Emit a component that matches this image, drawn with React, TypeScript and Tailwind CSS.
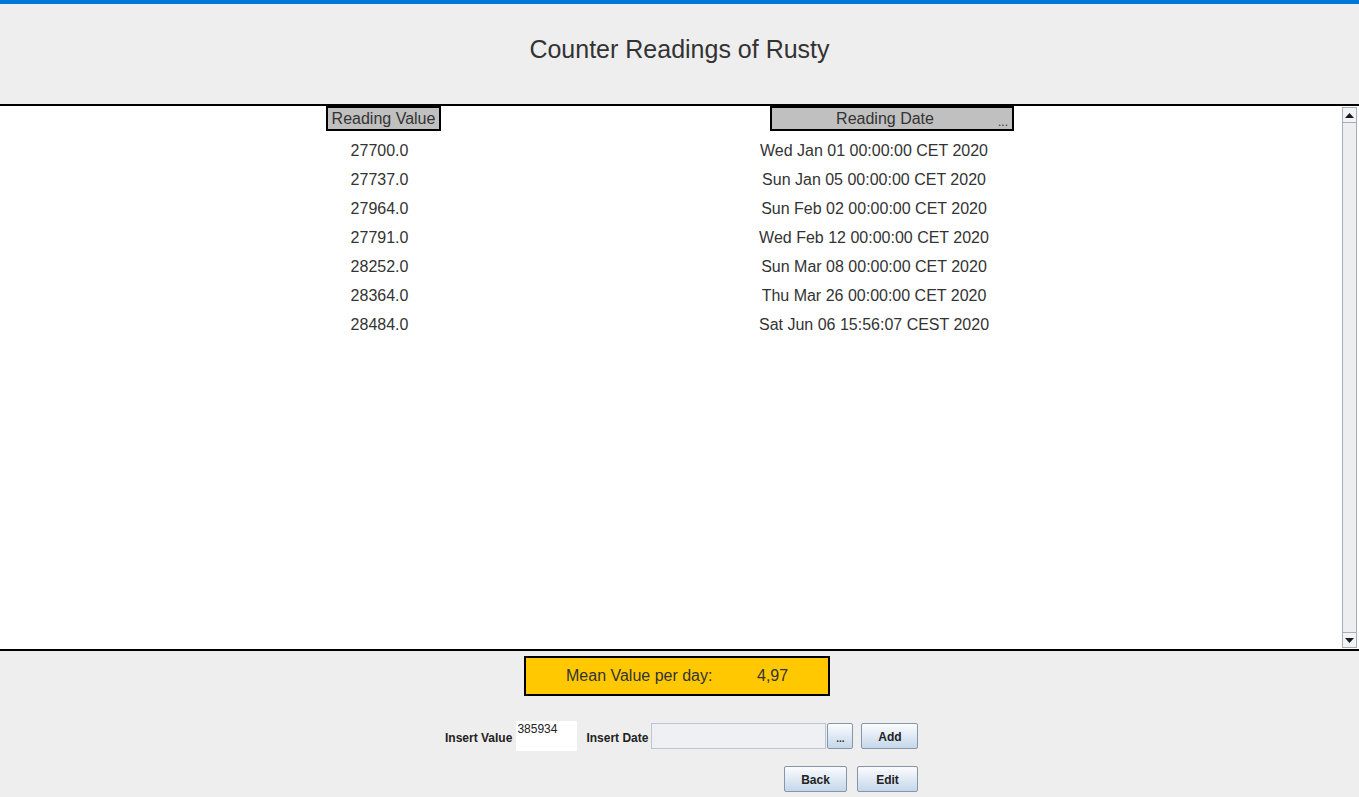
const readings = [
  { value: "27700.0", date: "Wed Jan 01 00:00:00 CET 2020" },
  { value: "27737.0", date: "Sun Jan 05 00:00:00 CET 2020" },
  { value: "27964.0", date: "Sun Feb 02 00:00:00 CET 2020" },
  { value: "27791.0", date: "Wed Feb 12 00:00:00 CET 2020" },
  { value: "28252.0", date: "Sun Mar 08 00:00:00 CET 2020" },
  { value: "28364.0", date: "Thu Mar 26 00:00:00 CET 2020" },
  { value: "28484.0", date: "Sat Jun 06 15:56:07 CEST 2020" },
];

function SwingButton({ label, width }: { label: string; width: string }) {
  return (
    <button
      className={`${width} h-[26px] pt-[1px] border border-[#8596aa] rounded-[2px] bg-gradient-to-b from-[#fbfcfe] to-[#c5d7ea] text-[12px] font-bold text-[#222] leading-none`}
    >
      {label}
    </button>
  );
}

function ScrollBar() {
  return (
    <div className="w-[15px] mr-[2px] mt-[1px] mb-[1px] flex flex-col border border-[#a3afbb] bg-[#eceef0]">
      <div className="h-[15px] border-b border-[#a3afbb] bg-[#f2f3f4] flex items-center justify-center">
        <svg width="9" height="5" viewBox="0 0 9 5">
          <path d="M0 5 L4.5 0 L9 5 Z" fill="#1a1a1a" />
        </svg>
      </div>
      <div className="flex-1" />
      <div className="h-[15px] border-t border-[#a3afbb] bg-[#f2f3f4] flex items-center justify-center">
        <svg width="9" height="5" viewBox="0 0 9 5">
          <path d="M0 0 L4.5 5 L9 0 Z" fill="#1a1a1a" />
        </svg>
      </div>
    </div>
  );
}

export default function App() {
  return (
    <div className="w-[1359px] h-[797px] flex flex-col bg-[#eeeeee] text-[#333] font-['Liberation_Sans',Arial,sans-serif] overflow-hidden">
      <div className="h-[4px] bg-[#0078d7]" />

      {/* title */}
      <div className="h-[100px] pt-[31px] text-center">
        <h1 className="text-[25px] leading-[28px]">Counter Readings of Rusty</h1>
      </div>

      {/* table in scroll pane */}
      <div className="h-[547px] border-y-2 border-black bg-white flex">
        <div className="flex-1">
          <div className="flex text-[16px] leading-[20px]">
            <div className="ml-[326px] w-[115px] h-[25px] border-2 border-black bg-[#c0c0c0] flex items-center justify-center">
              Reading Value
            </div>
            <div className="ml-[329px] w-[244px] h-[25px] border-2 border-black bg-[#c0c0c0] flex items-center relative">
              <span className="flex-1 text-center pr-[14px]">Reading Date</span>
              <span className="absolute right-[4px] bottom-[1px] text-[12px] leading-none">...</span>
            </div>
          </div>
          <div className="mt-[5px]">
            {readings.map((r) => (
              <div key={r.date} className="flex h-[29px] items-center text-[16px]">
                <div className="ml-[322px] w-[115px] text-center">{r.value}</div>
                <div className="ml-[315px] w-[244px] text-center">{r.date}</div>
              </div>
            ))}
          </div>
        </div>
        <ScrollBar />
      </div>

      {/* bottom controls */}
      <div className="flex-1 flex flex-col">
        <div className="ml-[524px] mt-[5px] w-[306px] h-[40px] border-2 border-black bg-[#ffc800] flex items-center text-[16px]">
          <span className="ml-[40px] w-[191px]">Mean Value per day:</span>
          <span>4,97</span>
        </div>

        <div className="ml-[445px] mt-[25px] flex items-center h-[30px] text-[12px]">
          <span className="pt-[3px] font-bold text-[#222]">Insert Value</span>
          <div className="ml-[4px] w-[61px] h-[30px] bg-white pl-[1px] pt-[1px] leading-[15px] text-[#222]">385934</div>
          <span className="ml-[9px] pt-[3px] font-bold text-[#222]">Insert Date</span>
          <div className="ml-[3px] w-[175px] h-[26px] bg-[#eef0f3] border border-[#b9c6d3]" />
          <button className="ml-[1px] w-[26px] h-[26px] border border-[#8596aa] rounded-[2px] bg-gradient-to-b from-[#fbfcfe] to-[#c5d7ea] flex items-end justify-center pb-[4px]">
            <span className="text-[10px] leading-none font-bold text-[#333]">...</span>
          </button>
          <div className="ml-[8px]">
            <SwingButton label="Add" width="w-[57px]" />
          </div>
        </div>

        <div className="ml-[784px] mt-[15px] flex gap-[10px]">
          <SwingButton label="Back" width="w-[63px]" />
          <SwingButton label="Edit" width="w-[61px]" />
        </div>
      </div>
    </div>
  );
}
